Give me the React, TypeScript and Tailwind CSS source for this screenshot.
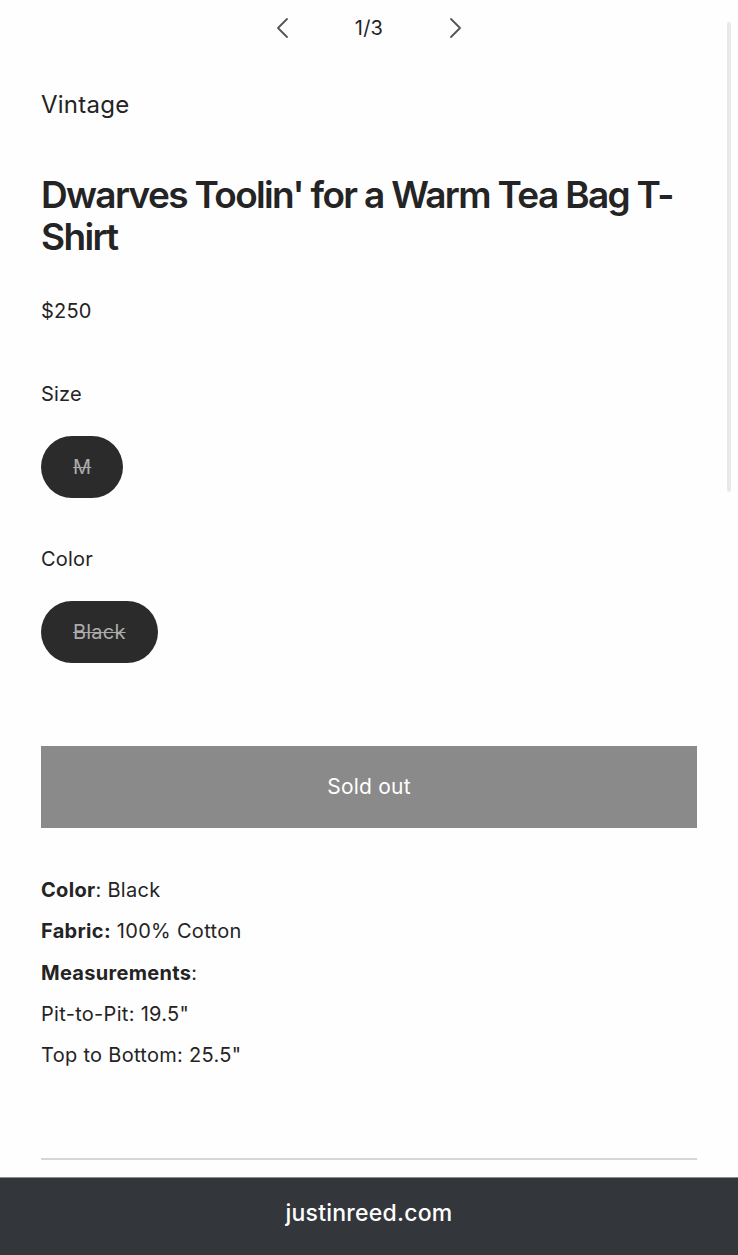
const details = [
  { label: 'Color', sep: ':', value: ' Black' },
  { label: 'Fabric:', sep: '', value: ' 100% Cotton' },
  { label: 'Measurements', sep: ':', value: '' },
];

function Chevron({ dir }: { dir: 'left' | 'right' }) {
  return (
    <svg width="14" height="22" viewBox="0 0 14 22" fill="none" stroke="#555" strokeWidth="1.8" strokeLinecap="round" strokeLinejoin="round">
      {dir === 'left' ? <polyline points="12,2 3,11 12,20" /> : <polyline points="2,2 11,11 2,20" />}
    </svg>
  );
}

function OptionPill({ label }: { label: string }) {
  return (
    <div className="flex h-[62px] w-fit items-center justify-center rounded-full bg-[#2b2b2b] px-8 text-[20px] tracking-[0.01em] text-[#ababab] line-through decoration-1">
      {label}
    </div>
  );
}

export default function App() {
  return (
    <div
      className="relative min-h-[1255px] bg-[#fefefe] text-[#242424]"
      style={{ fontFamily: 'Inter, "Liberation Sans", sans-serif' }}
    >
      {/* scroll indicator */}
      <div className="absolute right-[7px] top-[22px] h-[470px] w-[4px] rounded-full bg-[#e9e9e9]" />

      {/* Slider nav */}
      <div className="flex h-[55px] items-center justify-center gap-[66px]">
        <Chevron dir="left" />
        <span className="text-[20px] tracking-[0.01em]">1/3</span>
        <Chevron dir="right" />
      </div>

      <div className="px-[41px]">
        <p className="mt-[36px] text-[24px] leading-[28px] tracking-[0.01em]">Vintage</p>

        <h1 className="mt-[55px] text-[37px] font-semibold leading-[42px] tracking-[-0.045em]">
          Dwarves Toolin' for a Warm Tea Bag T-Shirt
        </h1>

        <p className="mt-[39px] text-[20px] leading-[28px] tracking-[0.01em]">$250</p>

        <p className="mt-[55px] text-[20px] leading-[28px] tracking-[0.01em]">Size</p>
        <div className="mt-[28px]">
          <OptionPill label="M" />
        </div>

        <p className="mt-[47px] text-[20px] leading-[28px] tracking-[0.01em]">Color</p>
        <div className="mt-[28px]">
          <OptionPill label="Black" />
        </div>

        <button className="mt-[83px] flex h-[82px] w-full items-center justify-center bg-[#8a8a8a] text-[21px] tracking-[0.01em] text-white">
          Sold out
        </button>

        <div className="mt-[48px] flex flex-col gap-[13.3px] text-[20px] leading-[28px] tracking-[0.015em]">
          {details.map((d) => (
            <p key={d.label}>
              <span className="font-bold">{d.label}</span>
              {d.sep}
              {d.value}
            </p>
          ))}
          <p>Pit-to-Pit: 19.5"</p>
          <p>Top to Bottom: 25.5"</p>
        </div>

        <div className="mt-[89px] h-[2px] bg-[#d6d6d6]" />
      </div>

      <footer className="mt-[17px] flex h-[78px] items-center justify-center border-t border-[#8c8c8c] bg-[#33363a] pb-[6px]">
        <span className="text-[23px] font-medium tracking-[0.01em] text-white">justinreed.com</span>
      </footer>
    </div>
  );
}
